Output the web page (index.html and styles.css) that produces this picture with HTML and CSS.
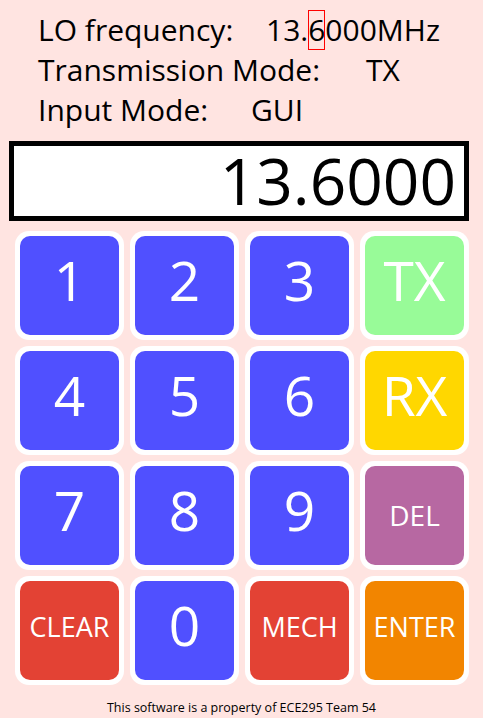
FILE: index.html
```html
<!DOCTYPE html>
<html>
<head>
<meta charset="utf-8">
<link rel="stylesheet" href="styles.css">
</head>
<body>
<div class="info">
  <div class="row"><span class="label l1">LO frequency:</span><span class="value">13.<span class="cursor">6</span>000MHz</span></div>
  <div class="row"><span class="label l2">Transmission Mode:</span><span class="value">TX</span></div>
  <div class="row"><span class="label l3">Input Mode:</span><span class="value">GUI</span></div>
</div>
<div class="display">13.6000</div>
<div class="keypad">
  <div class="key"><div class="face blue big">1</div></div>
  <div class="key"><div class="face blue big">2</div></div>
  <div class="key"><div class="face blue big">3</div></div>
  <div class="key"><div class="face green big">TX</div></div>
  <div class="key"><div class="face blue big">4</div></div>
  <div class="key"><div class="face blue big">5</div></div>
  <div class="key"><div class="face blue big">6</div></div>
  <div class="key"><div class="face gold big">RX</div></div>
  <div class="key"><div class="face blue big">7</div></div>
  <div class="key"><div class="face blue big">8</div></div>
  <div class="key"><div class="face blue big">9</div></div>
  <div class="key"><div class="face purple small del">DEL</div></div>
  <div class="key"><div class="face red small">CLEAR</div></div>
  <div class="key"><div class="face blue big">0</div></div>
  <div class="key"><div class="face red small">MECH</div></div>
  <div class="key"><div class="face orange small">ENTER</div></div>
</div>
<div class="footer">This software is a property of ECE295 Team 54</div>
</body>
</html>
```
FILE: styles.css
```css
html, body {
  margin: 0;
  padding: 0;
}
body {
  background: #ffe4e1;
  font-family: "Open Sans", "Noto Sans", sans-serif;
  color: #000;
  width: 483px;
  height: 718px;
  overflow: hidden;
}
.info {
  padding: 10px 0 0 38px;
  font-size: 30px;
  line-height: 40px;
}
.row {
  display: flex;
  white-space: nowrap;
}
.label {
  display: inline-block;
}
.l1 { width: 228px; }
.l2 { width: 328px; }
.l3 { width: 213px; }
.cursor {
  display: inline-block;
  line-height: 40px;
  outline: 1px solid #ff0000;
  outline-offset: -1px;
}
.display {
  margin: 11px 0 0 9px;
  width: 442px;
  height: 70px;
  padding-right: 8px;
  border: 5px solid #000;
  background: #fff;
  font-size: 64px;
  line-height: 70px;
  text-align: right;
  white-space: nowrap;
}
.keypad {
  display: grid;
  grid-template-columns: repeat(4, 109px);
  grid-auto-rows: 109px;
  gap: 6px;
  margin: 10px 0 0 15px;
}
.key {
  background: #fff;
  border-radius: 14px;
  padding: 5px;
  box-sizing: border-box;
  display: flex;
}
.face {
  flex: 1;
  border-radius: 10px;
  color: #fff;
  display: flex;
  align-items: center;
  justify-content: center;
  box-sizing: border-box;
}
.big {
  font-size: 55px;
  padding-bottom: 12px;
}
.small {
  font-size: 27px;
  padding-bottom: 8px;
}
.small.del {
  font-size: 28px;
  padding-bottom: 2px;
}
.blue { background: #5050ff; }
.green { background: #98fb98; }
.gold { background: #ffd700; }
.purple { background: #b768a2; }
.red { background: #e34234; }
.orange { background: #f28500; }
.footer {
  margin-top: 14px;
  text-align: center;
  font-size: 12.5px;
  line-height: 17px;
}
```
